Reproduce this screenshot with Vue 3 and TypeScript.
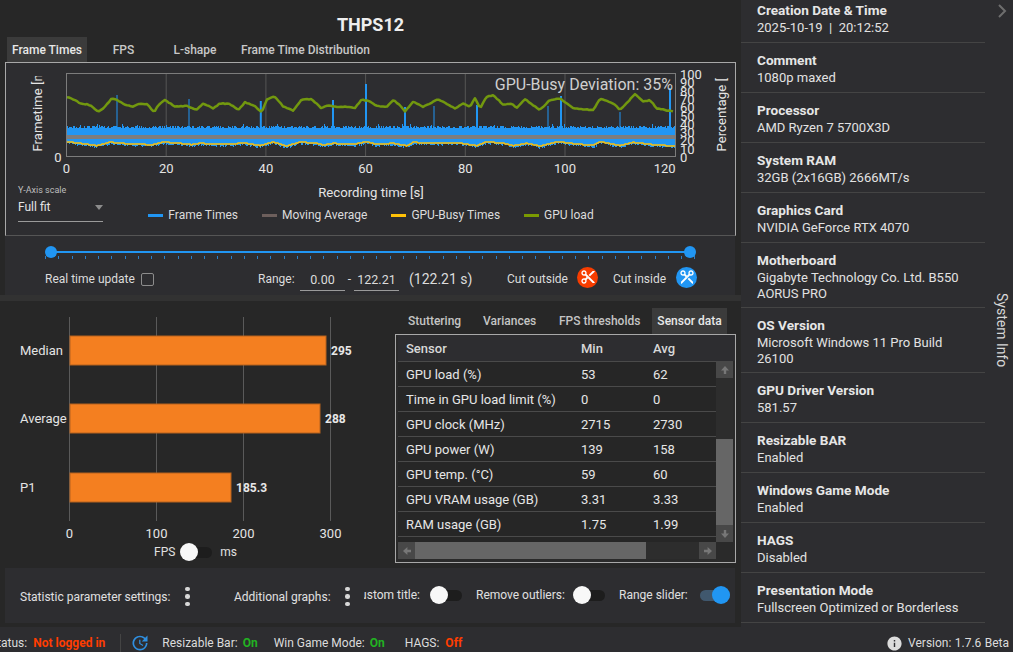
<script setup lang="ts">
function mulberry(seed: number) {
  return () => {
    seed |= 0; seed = (seed + 0x6d2b79f5) | 0;
    let t = Math.imul(seed ^ (seed >>> 15), 1 | seed);
    t = (t + Math.imul(t ^ (t >>> 7), 61 | t)) ^ t;
    return ((t ^ (t >>> 14)) >>> 0) / 4294967296;
  };
}
const z1 = (p: number[]) => [p[0] / 3, p[1] / 3];
const z2 = (p: number[]) => [380 + p[0] / 3, 60 + p[1] / 3];
const greenPts = [
  ...[[200,292],[215,295],[240,310],[270,315],[295,335],[315,320],[335,295],[350,300],[375,315],[400,320],[415,312],[440,312],[463,337],[475,315],[495,300],[510,310],[525,320],[560,318],[590,330],[610,310],[640,325],[660,310],[690,312],[715,330],[735,307],[760,315],[785,337],[800,300],[822,288],[850,320],[880,332],[905,298],[935,298],[965,325],[985,315],[1010,322],[1050,320],[1065,325],[1085,298],[1110,305],[1130,318]].map(z1),
  ...[[0,140],[20,140],[40,120],[60,135],[75,155],[100,125],[130,140],[175,118],[225,145],[250,130],[270,140],[285,115],[300,145],[320,110],[340,105],[370,135],[395,130],[410,145],[435,118],[480,150],[510,120],[540,115],[580,145],[640,150],[660,115],[700,130],[720,150],[765,103],[790,125],[810,120],[830,145],[880,155]].map(z2),
];
const yellowPts = [
  ...[[200,425],[240,430],[290,437],[320,430],[330,426],[360,430],[420,432],[455,435],[490,426],[540,430],[575,434],[600,430],[650,432],[700,432],[730,428],[780,437],[820,426],[860,438],[900,426],[950,430],[970,435],[1000,430],[1060,433],[1100,425],[1130,433]].map(z1),
  ...[[0,252],[40,250],[80,257],[100,247],[170,250],[230,248],[290,257],[320,245],[370,250],[400,257],[440,250],[480,258],[535,245],[590,252],[640,256],[660,245],[720,257],[760,247],[820,254],[880,258]].map(z2),
];
function interp(pts: number[][], x: number) {
  for (let i = 1; i < pts.length; i++) {
    if (x <= pts[i][0]) {
      const [a, b] = pts[i - 1]; const [c, d] = pts[i];
      return b + ((d - b) * (x - a)) / Math.max(c - a, 0.01);
    }
  }
  return pts[pts.length - 1][1];
}
const line = (pts: number[][]) => pts.map((p) => p[0].toFixed(1) + ',' + p[1].toFixed(1)).join(' ');
const rnd = mulberry(12);
const smoothGreen: number[][] = [];
for (let x = 67; x <= 673; x += 2) {
  smoothGreen.push([x, interp(greenPts, x) + (rnd() - 0.5) * 0.8]);
}
const greenLine = line(smoothGreen);
const tops: string[] = [];
const bots: string[] = [];
const yellowStep: number[][] = [];
for (let x = 67; x <= 675; x += 1) {
  const t = 128 - Math.floor(rnd() * 3) - (rnd() > 0.95 ? 2 : 0);
  const yl = interp(yellowPts, x);
  const b = Math.round(yl + 0.6 + rnd() * 2.2);
  tops.push(`${x},${t} ${x + 1},${t}`);
  bots.unshift(`${x + 1},${b} ${x},${b}`);
  yellowStep.push([x, Math.round(yl)]);
}
const bandPoints = [...tops, ...bots].join(' ');
const yellowLine = line(yellowStep);
const spikes = [
  [116.5, 95, 1], [188.5, 99, 1], [259.8, 101, 2], [332, 100, 2], [365, 84, 2],
  [404, 107, 2], [433.5, 106, 1], [476, 105, 2], [547.5, 106, 1], [560, 96, 2],
  [619.5, 112, 1], [669, 88, 2],
];
const xTicks = [0, 20, 40, 60, 80, 100, 120];
const xPos = (v: number) => 66.5 + v * 4.985;
const pct = [0, 10, 20, 30, 40, 50, 60, 70, 80, 90, 100];
const legend = [
  { label: 'Frame Times', color: '#2196f3' },
  { label: 'Moving Average', color: '#6d5f5c' },
  { label: 'GPU-Busy Times', color: '#ffc107' },
  { label: 'GPU load', color: '#7a9a01' },
];
const sliderTicks = Array.from({ length: 50 }, (_, i) => i);
const mainTabs = [
  { label: 'Frame Times', active: true },
  { label: 'FPS', active: false },
  { label: 'L-shape', active: false },
  { label: 'Frame Time Distribution', active: false },
];
const subTabs = [
  { label: 'Stuttering', active: false },
  { label: 'Variances', active: false },
  { label: 'FPS thresholds', active: false },
  { label: 'Sensor data', active: true },
];
const bars = [
  { label: 'Median', value: '295', y: 336, w: 256 },
  { label: 'Average', value: '288', y: 404, w: 250 },
  { label: 'P1', value: '185.3', y: 473, w: 161 },
];
const barGrid = [
  { x: 69.5, t: '0' }, { x: 156.5, t: '100' }, { x: 243.5, t: '200' }, { x: 330.5, t: '300' },
];
const rows = [
  ['GPU load (%)', '53', '62'],
  ['Time in GPU load limit (%)', '0', '0'],
  ['GPU clock (MHz)', '2715', '2730'],
  ['GPU power (W)', '139', '158'],
  ['GPU temp. (°C)', '59', '60'],
  ['GPU VRAM usage (GB)', '3.31', '3.33'],
  ['RAM usage (GB)', '1.75', '1.99'],
];
const info = [
  { t: 'Creation Date & Time', v: '2025-10-19  |  20:12:52' },
  { t: 'Comment', v: '1080p maxed' },
  { t: 'Processor', v: 'AMD Ryzen 7 5700X3D' },
  { t: 'System RAM', v: '32GB (2x16GB) 2666MT/s' },
  { t: 'Graphics Card', v: 'NVIDIA GeForce RTX 4070' },
  { t: 'Motherboard', v: 'Gigabyte Technology Co. Ltd. B550 AORUS PRO', tall: true },
  { t: 'OS Version', v: 'Microsoft Windows 11 Pro Build 26100', tall: true },
  { t: 'GPU Driver Version', v: '581.57' },
  { t: 'Resizable BAR', v: 'Enabled' },
  { t: 'Windows Game Mode', v: 'Enabled' },
  { t: 'HAGS', v: 'Disabled' },
  { t: 'Presentation Mode', v: 'Fullscreen Optimized or Borderless' },
];
const cutPath = 'M9.64 7.64c.23-.5.36-1.05.36-1.64 0-2.21-1.79-4-4-4S2 3.79 2 6s1.79 4 4 4c.59 0 1.14-.13 1.64-.36L10 12l-2.36 2.36C7.14 14.13 6.59 14 6 14c-2.21 0-4 1.79-4 4s1.79 4 4 4 4-1.79 4-4c0-.59-.13-1.14-.36-1.64L12 14l7 7h3v-1L9.64 7.64zM6 8c-1.1 0-2-.89-2-2s.9-2 2-2 2 .89 2 2-.9 2-2 2zm0 12c-1.1 0-2-.89-2-2s.9-2 2-2 2 .89 2 2-.9 2-2 2zm6-7.5c-.28 0-.5-.22-.5-.5s.22-.5.5-.5.5.22.5.5-.22.5-.5.5zM19 3l-6 6 2 2 7-7V3z';
</script>

<template>
  <div class="app">
    <div class="left">
      <h1 class="title">THPS12</h1>
      <div class="tabs main-tabs">
        <span v-for="t in mainTabs" :key="t.label" class="tab" :class="{ active: t.active }">{{ t.label }}</span>
      </div>
      <section class="chart-box">
        <svg class="plot" width="729" height="118" viewBox="6 63 729 118">
          <defs>
            <clipPath id="clip-ft"><rect x="25" y="76" width="25" height="90" /></clipPath>
            <clipPath id="clip-pc"><rect x="708" y="78" width="25" height="84" /></clipPath>
          </defs>
          <line v-for="v in [20, 40, 60, 80, 100]" :key="v" :x1="xPos(v)" :x2="xPos(v)" y1="74" y2="156" class="grid" />
          <polygon :points="bandPoints" fill="#2196f3" shape-rendering="crispEdges" />
          <rect v-for="(s, i) in spikes" :key="i" :x="s[0]" :y="s[1]" :width="s[2]" :height="130 - s[1]" fill="#2196f3" />
          <rect x="67" y="135" width="608" height="4" fill="#7d7d7d" />
          <polyline :points="yellowLine" fill="none" stroke="#ffc107" stroke-width="1.5" />
          <polyline :points="greenLine" fill="none" stroke="#72980f" stroke-width="2.5" stroke-linejoin="round" />
          <rect x="66.5" y="73.5" width="609" height="83" class="frame" />
          <text x="673" y="90" text-anchor="end" class="dev">GPU-Busy Deviation: 35%</text>
          <g clip-path="url(#clip-ft)"><text transform="translate(42 151.5) rotate(-90)" class="axis-title">Frametime [ms]</text></g>
          <g clip-path="url(#clip-pc)"><text transform="translate(726 151.5) rotate(-90)" class="axis-title">Percentage [%]</text></g>
          <text x="58" y="162" text-anchor="middle" class="tick">0</text>
          <text v-for="v in xTicks" :key="v" :x="xPos(v)" y="173" text-anchor="middle" class="tick">{{ v }}</text>
          <text v-for="p in pct" :key="p" x="680" :y="162 - p * 0.83" class="tick">{{ p }}</text>
        </svg>
        <div class="chart-foot">
          <div class="y-scale">
            <div class="y-scale-label">Y-Axis scale</div>
            <div class="y-scale-select"><span>Full fit</span><i class="caret"></i></div>
          </div>
          <div class="foot-center">
            <div class="x-title">Recording time [s]</div>
            <div class="legend">
              <span v-for="l in legend" :key="l.label" class="legend-item">
                <i class="swatch" :style="{ background: l.color }"></i>{{ l.label }}
              </span>
            </div>
          </div>
        </div>
      </section>
      <section class="range-panel">
        <div class="slider">
          <div class="track"></div>
          <i class="thumb thumb-l"></i>
          <i class="thumb thumb-r"></i>
          <div class="slider-ticks"><i v-for="t in sliderTicks" :key="t"></i></div>
        </div>
        <div class="range-row">
          <span class="rt">Real time update</span>
          <i class="checkbox"></i>
          <span class="range-label">Range:</span>
          <span class="num-input">0.00</span>
          <span class="dash">-</span>
          <span class="num-input">122.21</span>
          <span class="range-total">(122.21 s)</span>
          <span class="cut-label">Cut outside</span>
          <span class="cut-btn orange"><svg width="16" height="16" viewBox="0 0 24 24"><path :d="cutPath" fill="#fff" /></svg></span>
          <span class="cut-label second">Cut inside</span>
          <span class="cut-btn blue"><svg width="16" height="16" viewBox="0 0 24 24"><path :d="cutPath" fill="#fff" transform="rotate(90 12 12)" /></svg></span>
        </div>
      </section>
      <div class="split-bar"></div>
      <section class="lower">
        <div class="bar-pane">
          <svg width="395" height="232" viewBox="0 310 395 232">
            <line v-for="g in barGrid" :key="g.x" :x1="g.x" :x2="g.x" y1="317" y2="521" class="bar-grid" />
            <g v-for="b in bars" :key="b.label">
              <rect x="70" :y="b.y" :width="b.w" height="29" class="bar" />
              <text x="20" :y="b.y + 19" class="tick">{{ b.label }}</text>
              <text :x="70 + b.w + 5" :y="b.y + 19" class="bar-value">{{ b.value }}</text>
            </g>
            <text v-for="g in barGrid" :key="g.t" :x="g.x" y="538" text-anchor="middle" class="tick">{{ g.t }}</text>
          </svg>
          <div class="unit-toggle">
            <span>FPS</span>
            <span class="toggle"><i class="knob"></i></span>
            <span class="ms">ms</span>
          </div>
        </div>
        <div class="table-pane">
          <div class="tabs sub-tabs">
            <span v-for="t in subTabs" :key="t.label" class="tab" :class="{ active: t.active }">{{ t.label }}</span>
          </div>
          <div class="table-box">
            <div class="row head"><span class="c1">Sensor</span><span class="c2">Min</span><span>Avg</span></div>
            <div class="table-body">
              <div class="rows">
                <div v-for="r in rows" :key="r[0]" class="row">
                  <span class="c1">{{ r[0] }}</span><span class="c2">{{ r[1] }}</span><span>{{ r[2] }}</span>
                </div>
              </div>
              <div class="vscroll">
                <span class="sb-btn"><svg width="10" height="10" viewBox="0 0 10 10"><path d="M5 1 9 5.4H6.2V9H3.8V5.4H1z" fill="#777" /></svg></span>
                <span class="v-space"></span>
                <span class="v-thumb"></span>
                <span class="sb-btn"><svg width="10" height="10" viewBox="0 0 10 10"><path d="M5 9 1 4.6h2.8V1h2.4v3.6H9z" fill="#777" /></svg></span>
              </div>
            </div>
            <div class="hscroll">
              <span class="sb-btn"><svg width="10" height="10" viewBox="0 0 10 10"><path d="M1 5 5.4 1v2.8H9v2.4H5.4V9z" fill="#777" /></svg></span>
              <span class="h-thumb"></span>
              <span class="h-space"></span>
              <span class="sb-btn"><svg width="10" height="10" viewBox="0 0 10 10"><path d="M9 5 4.6 9V6.200H1V3.800h3.600V1z" fill="#777" /></svg></span>
            </div>
          </div>
        </div>
      </section>
      <section class="options">
        <span class="opt-a">Statistic parameter settings:</span>
        <span class="dots"><i></i><i></i><i></i></span>
        <span class="opt-b">Additional graphs:</span>
        <span class="dots"><i></i><i></i><i></i></span>
        <span class="clip-label"><span>Custom title:</span></span>
        <span class="toggle opt-t1"><i class="knob"></i></span>
        <span class="opt-c">Remove outliers:</span>
        <span class="toggle opt-t2"><i class="knob"></i></span>
        <span class="opt-d">Range slider:</span>
        <span class="toggle on"><i class="knob"></i></span>
      </section>
    </div>
    <aside class="side">
      <div class="side-list">
        <div v-for="i in info" :key="i.t" class="side-item" :class="{ tall: i.tall }">
          <div class="side-title">{{ i.t }}</div>
          <div class="side-value">{{ i.v }}</div>
        </div>
      </div>
      <div class="rail">
        <svg class="chev" width="10" height="16" viewBox="0 0 10 16"><path d="M2 2l6 6-6 6" fill="none" stroke="#6e6e6e" stroke-width="2" /></svg>
        <span class="rail-text">System Info</span>
      </div>
    </aside>
    <footer class="status">
      <span class="st-first">Status:</span>
      <span class="red">Not logged in</span>
      <i class="st-div"></i>
      <svg class="st-icon" width="20" height="20" viewBox="0 0 24 24"><path d="M21 10.120h-6.780l2.740-2.820c-2.730-2.700-7.150-2.800-9.880-.1-2.730 2.710-2.730 7.080 0 9.790s7.150 2.710 9.880 0C18.320 15.650 19 14.080 19 12.100h2c0 1.980-.88 4.550-2.640 6.290-3.510 3.480-9.210 3.480-12.720 0-3.500-3.470-3.530-9.110-.02-12.580s9.140-3.470 12.650 0L21 3v7.120zM12.500 8v4.250l3.500 2.080-.72 1.210L11 13V8h1.500z" fill="#2f8fe0" /></svg>
      <span class="st-a">Resizable Bar:</span><span class="green">On</span>
      <span class="st-b">Win Game Mode:</span><span class="green">On</span>
      <span class="st-c">HAGS:</span><span class="red">Off</span>
      <svg class="st-info" width="17" height="17" viewBox="0 0 24 24"><path d="M12 2C6.480 2 2 6.480 2 12s4.480 10 10 10 10-4.480 10-10S17.520 2 12 2zm1 15h-2v-6h2v6zm0-8h-2V7h2v2z" fill="#dcdcdc" /></svg>
      <span class="st-ver">Version: 1.7.6 Beta</span>
    </footer>
  </div>
</template>

<style>
html, body { margin: 0; background: #2d2d30; }
</style>

<style scoped>
.app {
  width: 1013px; height: 652px; overflow: hidden; display: grid;
  grid-template-columns: 741px 272px; grid-template-rows: 627px 25px;
  background: #2d2d30; color: #e6e6e6;
  font-family: Roboto, "Liberation Sans", sans-serif; font-size: 13px;
}
.left { background: #272727; display: flex; flex-direction: column; min-width: 0; }
.title { margin: 0; height: 37px; box-sizing: border-box; padding-top: 14px; width: 741px; text-align: center; font-size: 18px; line-height: 21px; font-weight: 700; color: #eee; }
.tabs { display: flex; }
.main-tabs { height: 25px; margin-left: 7px; }
.tab { font-size: 12px; font-weight: 500; color: #c8c8c8; display: flex; align-items: center; justify-content: center; box-sizing: border-box; }
.tab.active { background: #3b3b3b; color: #e8e8e8; }
.main-tabs .tab:nth-child(1) { width: 80px; }
.main-tabs .tab:nth-child(2) { width: 73px; }
.main-tabs .tab:nth-child(3) { width: 70px; }
.main-tabs .tab:nth-child(4) { width: 151px; }
.chart-box { margin-left: 5px; width: 731px; height: 174px; box-sizing: border-box; border: 1px solid #a8a8a8; border-bottom-color: #555; background: #2d2d30; display: flex; flex-direction: column; }
.plot { display: block; flex: none; height: 118px; }
.grid { stroke: #555; stroke-width: 1; }
.frame { fill: none; stroke: #7c7c7c; stroke-width: 1; }
.tick { font-size: 13px; fill: #e4e4e4; font-family: Roboto, sans-serif; }
.dev { font-size: 16px; fill: #cfcfcf; font-family: Roboto, sans-serif; }
.axis-title { font-size: 13.200px; fill: #e4e4e4; font-family: Roboto, sans-serif; }
.chart-foot { display: flex; flex: 1; }
.y-scale { width: 85px; margin-left: 12px; margin-top: 2px; flex: none; }
.y-scale-label { font-size: 9px; line-height: 12px; color: #bdbdbd; margin-top: 1px; }
.y-scale-select { height: 26px; box-sizing: border-box; border-bottom: 1px solid #9a9a9a; font-size: 12px; display: flex; align-items: center; justify-content: space-between; padding: 0 0 3px 0; color: #e4e4e4; }
.caret { width: 0; height: 0; border: 4.500px solid transparent; border-top: 5px solid #8c8c8c; border-bottom: 0; }
.foot-center { width: 446px; margin-left: 45px; display: flex; flex-direction: column; align-items: center; }
.x-title { font-size: 13.200px; line-height: 16px; margin-top: 4px; color: #e4e4e4; }
.legend { display: flex; gap: 24px; margin-top: 6px; font-size: 12px; line-height: 16px; color: #dcdcdc; }
.legend-item { display: flex; align-items: center; white-space: nowrap; }
.swatch { width: 15px; height: 3px; margin-right: 5px; }
.range-panel { margin-left: 5px; width: 730px; height: 59px; background: #2d2d30; box-sizing: border-box; padding-top: 10px; }
.slider { position: relative; margin-left: 40px; width: 651px; height: 13px; }
.track { position: absolute; left: 6px; right: 6px; top: 5px; height: 2px; background: #2196f3; }
.thumb { position: absolute; top: 0; width: 12px; height: 12px; border-radius: 50%; background: #2196f3; }
.thumb-l { left: 0; }
.thumb-r { right: 0; }
.slider-ticks { position: absolute; left: 0; right: 0; top: 10px; display: flex; justify-content: space-between; }
.slider-ticks i { width: 1px; height: 3px; background: #2a7fc7; }
.range-row { display: flex; align-items: center; height: 22px; margin-top: 9px; margin-left: 40px; font-size: 12px; color: #dcdcdc; }
.rt { width: 96px; white-space: nowrap; }
.checkbox { width: 11px; height: 11px; border: 1.500px solid #8c8c8c; border-radius: 2px; }
.range-label { margin-left: 104px; width: 42px; }
.num-input { width: 45px; height: 22px; box-sizing: border-box; margin-top: 1px; padding-top: 3px; text-align: center; border-bottom: 1px solid #9a9a9a; font-size: 12.500px; }
.dash { width: 9px; text-align: center; }
.range-total { margin-left: 10px; width: 98px; font-size: 14px; color: #dcdcdc; white-space: nowrap; }
.cut-label { width: 64px; white-space: nowrap; }
.cut-label.second { margin-left: 15px; width: 57px; }
.cut-btn { width: 21px; height: 21px; border-radius: 50%; display: flex; align-items: center; justify-content: center; margin-left: 6px; margin-top: -4px; }
.cut-btn.orange { background: #f73d00; }
.cut-btn.blue { background: #2196f3; }
.split-bar { height: 6px; background: #323232; }
.lower { height: 267px; display: flex; }
.bar-pane { width: 395px; flex: none; padding-top: 9px; }
.bar-pane svg { display: block; }
.bar-grid { stroke: #5a5a5a; stroke-width: 1; }
.bar { fill: #f47f20; stroke: #b5631f; stroke-width: 1; }
.bar-value { font-size: 12px; font-weight: 700; fill: #e8e8e8; font-family: Roboto, sans-serif; }
.unit-toggle { display: flex; align-items: center; margin-left: 154px; height: 20px; font-size: 12px; color: #e0e0e0; }
.unit-toggle .toggle { margin-left: 5px; }
.ms { margin-left: 8px; }
.toggle { position: relative; display: inline-block; width: 32px; height: 11px; border-radius: 6px; background: #1d1d1d; margin-left: 4px; }
.knob { position: absolute; left: 0; top: -4px; width: 18px; height: 18px; border-radius: 50%; background: #f8f8f8; }
.toggle.on { background: #40586e; width: 30px; margin-left: 11px; }
.toggle.on .knob { left: auto; right: 0; background: #2196f3; }
.table-pane { flex: none; width: 341px; padding-top: 7px; display: flex; flex-direction: column; }
.sub-tabs { height: 26px; margin-left: 13px; }
.sub-tabs .tab { color: #c4c4c4; }
.sub-tabs .tab:nth-child(1) { width: 53px; justify-content: flex-start; }
.sub-tabs .tab:nth-child(2) { width: 56px; margin-left: 22px; justify-content: flex-start; }
.sub-tabs .tab:nth-child(3) { width: 81px; margin-left: 20px; justify-content: flex-start; white-space: nowrap; }
.sub-tabs .tab:nth-child(4) { width: 75px; margin-left: 12px; color: #e8e8e8; }
.table-box { width: 341px; height: 229px; box-sizing: border-box; border: 1px solid #a8a8a8; padding-left: 2px; background: #2a2a2a; }
.row { display: flex; align-items: center; height: 25px; width: 318px; box-sizing: border-box; border-bottom: 1px solid #4a4a4a; background: #262626; padding-left: 8px; font-size: 13px; color: #e6e6e6; white-space: nowrap; }
.row.head { height: 26px; width: 337px; padding-left: 8px; padding-top: 2px; background: #2d2d30; font-weight: 500; color: #d8d8d8; border-bottom-color: transparent; }
.c1 { width: 175px; flex: none; }
.c2 { width: 72px; flex: none; }
.table-body { display: flex; height: 181px; }
.rows { width: 318px; background: #262626; flex: none; border-top: 1px solid #4a4a4a; box-sizing: border-box; }
.vscroll { width: 17px; display: flex; flex-direction: column; background: #2d2d2d; flex: none; }
.sb-btn { width: 17px; height: 17px; background: #484848; display: flex; align-items: center; justify-content: center; flex: none; }
.v-space { height: 61px; }
.v-thumb { flex: 1; background: #666; }
.hscroll { display: flex; width: 318px; height: 17px; background: #2d2d2d; }
.h-thumb { width: 231px; background: #666; }
.h-space { flex: 1; }
.options { margin-left: 5px; width: 730px; height: 55px; background: #2d2d30; display: flex; align-items: center; font-size: 12px; color: #e0e0e0; white-space: nowrap; }
.opt-a { margin-left: 15px; width: 150px; margin-top: 2px; }
.dots { display: flex; flex-direction: column; gap: 3px; margin-top: 2px; width: 5px; margin-left: 15px; }
.dots i { width: 4.500px; height: 4.500px; border-radius: 50%; background: #d8d8d8; }
.opt-b { margin-left: 44px; width: 96px; margin-top: 2px; }
.clip-label { margin-left: 14px; width: 56px; overflow: hidden; display: flex; justify-content: flex-end; margin-top: -2px; }
.clip-label span { flex: none; }
.opt-t1 { margin-left: 10px; }
.opt-c { margin-left: 14px; width: 91px; margin-top: -2px; }
.opt-t2 { margin-left: 6px; }
.opt-d { margin-left: 14px; width: 70px; margin-top: -2px; }
.side { grid-row: 1; grid-column: 2; background: #2d2d30; display: flex; min-height: 0; overflow: hidden; }
.side-list { width: 244px; flex: none; margin-top: -7px; }
.side-item { box-sizing: border-box; padding: 9px 16px 0; min-height: 50px; border-bottom: 1px solid #444; }
.side-item.tall { min-height: 65px; }
.side-title { font-size: 13.600px; line-height: 17px; font-weight: 700; color: #e6e6e6; }
.side-value { font-size: 13px; line-height: 16px; padding-top: 1px; color: #e2e2e2; white-space: pre-wrap; }
.rail { flex: 1; display: flex; flex-direction: column; align-items: center; }
.chev { margin-top: 3px; margin-left: 6px; }
.rail-text { writing-mode: vertical-rl; font-size: 14px; margin-top: 274px; margin-left: 6px; color: #d6d6d6; white-space: nowrap; }
.status { grid-column: 1 / 3; display: flex; align-items: center; font-size: 12px; color: #dcdcdc; white-space: nowrap; overflow: hidden; padding-top: 7px; height: 25px; box-sizing: border-box; }
.st-first { margin-left: -10px; }
.red { color: #ff3d00; font-weight: 700; margin-left: 6px; }
.green { color: #22b322; font-weight: 700; margin-left: 5px; }
.st-div { width: 1px; height: 19px; background: #444; margin-left: 15px; }
.st-icon { margin-left: 9px; }
.st-a { margin-left: 12px; }
.st-b { margin-left: 16px; }
.st-c { margin-left: 20px; }
.st-info { margin-left: auto; }
.st-ver { margin-left: 5px; margin-right: 4px; word-spacing: 0.4px; }
</style>
